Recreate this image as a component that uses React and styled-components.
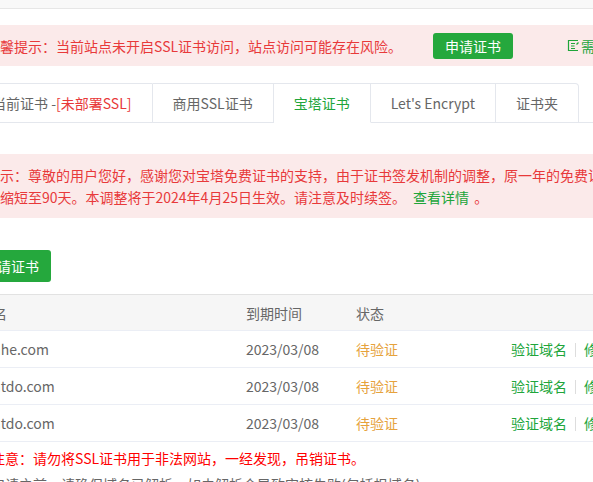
import React from 'react';
import styled, { createGlobalStyle } from 'styled-components';

const GlobalStyle = createGlobalStyle`
  html, body {
    margin: 0;
    padding: 0;
    background: #fff;
    overflow: hidden;
  }
  body {
    font-family: "Noto Sans CJK SC", "Noto Sans", sans-serif;
    font-size: 14px;
    color: #666;
  }
`;

const TopBar = styled.div`
  height: 8px;
  background: #f8f8f8;
  border-bottom: 1px solid #e6e6e6;
`;

const Viewport = styled.div`
  width: 100%;
  overflow: hidden;
`;

const Content = styled.div`
  width: 1000px;
  margin-left: -29px;
  padding-top: 16px;
`;

const Alert = styled.div`
  display: flex;
  align-items: center;
  height: 41px;
  padding: 0 15px;
  background: #fbeaea;
  color: #e8393a;
  white-space: nowrap;
`;

const Button = styled.button`
  height: ${(p) => (p.small ? '26px' : '32px')};
  padding: 0 12px;
  margin-left: ${(p) => p.offset || 0};
  border: none;
  border-radius: 3px;
  background: #25a83d;
  color: #fff;
  font-family: inherit;
  font-size: 14px;
  line-height: 1;
  cursor: pointer;
`;

const HelpLink = styled.a`
  display: inline-flex;
  align-items: center;
  gap: 1px;
  margin-left: 54px;
  color: #20a53a;
  text-decoration: none;
`;

const TabBar = styled.div`
  display: flex;
  margin-top: 17px;
  border-bottom: 1px solid #e4e7ed;
`;

const Tab = styled.div`
  height: 38px;
  line-height: 38px;
  padding: 0 20px;
  margin-bottom: -1px;
  border: 1px solid #e4e7ed;
  border-left: none;
  border-bottom-color: ${(p) => (p.active ? '#fff' : '#e4e7ed')};
  color: ${(p) => (p.active ? '#20a53a' : '#666')};
  background: #fff;
  white-space: nowrap;

  &:first-child {
    border-left: 1px solid #e4e7ed;
    border-top-left-radius: 4px;
  }
  &:last-child {
    border-top-right-radius: 4px;
  }
`;

const Red = styled.span`
  color: #e8393a;
`;

const Notice = styled.div`
  margin-top: 31px;
  padding: 10px 15px;
  background: #fbeaea;
  color: #e8393a;
  line-height: 22px;
  white-space: nowrap;

  a {
    margin: 0 2px 0 4px;
    color: #20a53a;
    text-decoration: none;
  }
`;

const Toolbar = styled.div`
  margin-top: 32px;
`;

const Table = styled.table`
  margin-top: 12px;
  width: 1000px;
  border-collapse: collapse;
  table-layout: fixed;

  th, td {
    padding: 0 8px;
    text-align: left;
    white-space: nowrap;
    overflow: hidden;
    border-bottom: 1px solid #ebeef5;
  }
  th {
    height: 35px;
    font-weight: normal;
    color: #666;
    background: #f6f6f6;
    border-top: 1px solid #e2e2e2;
  }
  td {
    height: 36px;
    color: #666;
  }
`;

const Status = styled.span`
  color: #e6a23c;
`;

const Action = styled.a`
  color: #20a53a;
  text-decoration: none;
`;

const Divider = styled.span`
  display: inline-block;
  width: 1px;
  height: 14px;
  margin: 0 8px;
  vertical-align: -2px;
  background: #ddd;
`;

const Tips = styled.ul`
  margin: 3px 0 0;
  padding: 0 0 0 20px;
  list-style: none;
  line-height: 26px;
  white-space: nowrap;
`;

const Tip = styled.li`
  color: ${(p) => (p.danger ? '#ff0000' : '#666')};
`;

const HelpIcon = () => (
  <svg width="13" height="13" viewBox="0 0 13 13" fill="none" stroke="#20a53a" strokeWidth="1.2">
    <path d="M11 1.5H1.5v10H11" />
    <path d="M4 4.5h4M4 7h3.5M4 9.5h4" />
    <path d="M9.5 5.5l2-2" />
  </svg>
);

const rows = [
  { domain: 'dmhe.com', date: '2023/03/08' },
  { domain: 'pmtdo.com', date: '2023/03/08' },
  { domain: 'pmtdo.com', date: '2023/03/08' },
];

export default function App() {
  return (
    <>
      <GlobalStyle />
      <TopBar />
      <Viewport>
        <Content>
          <Alert>
            温馨提示：当前站点未开启SSL证书访问，站点访问可能存在风险。
            <Button small offset="31px">申请证书</Button>
            <HelpLink href="#">
              <HelpIcon />
              需要帮助
            </HelpLink>
          </Alert>

          <TabBar>
            <Tab>当前证书 -<Red>[未部署SSL]</Red></Tab>
            <Tab>商用SSL证书</Tab>
            <Tab active>宝塔证书</Tab>
            <Tab>Let's Encrypt</Tab>
            <Tab>证书夹</Tab>
          </TabBar>

          <Notice>
            提示：尊敬的用户您好，感谢您对宝塔免费证书的支持，由于证书签发机制的调整，原一年的免费证书有效期将
            <br />
            将缩短至90天。本调整将于2024年4月25日生效。请注意及时续签。 <a href="#">查看详情</a> 。
          </Notice>

          <Toolbar>
            <Button>申请证书</Button>
          </Toolbar>

          <Table>
            <colgroup>
              <col style={{ width: 267 }} />
              <col style={{ width: 110 }} />
              <col style={{ width: 155 }} />
              <col />
            </colgroup>
            <thead>
              <tr>
                <th>域名</th>
                <th>到期时间</th>
                <th>状态</th>
                <th></th>
              </tr>
            </thead>
            <tbody>
              {rows.map((r, i) => (
                <tr key={i}>
                  <td>{r.domain}</td>
                  <td>{r.date}</td>
                  <td><Status>待验证</Status></td>
                  <td>
                    <Action href="#">验证域名</Action>
                    <Divider />
                    <Action href="#">修改域名</Action>
                    <Divider />
                    <Action href="#">删除</Action>
                  </td>
                </tr>
              ))}
            </tbody>
          </Table>

          <Tips>
            <Tip danger>注意：请勿将SSL证书用于非法网站，一经发现，吊销证书。</Tip>
            <Tip>申请之前，请确保域名已解析，如未解析会导致审核失败(包括根域名)</Tip>
          </Tips>
        </Content>
      </Viewport>
    </>
  );
}
